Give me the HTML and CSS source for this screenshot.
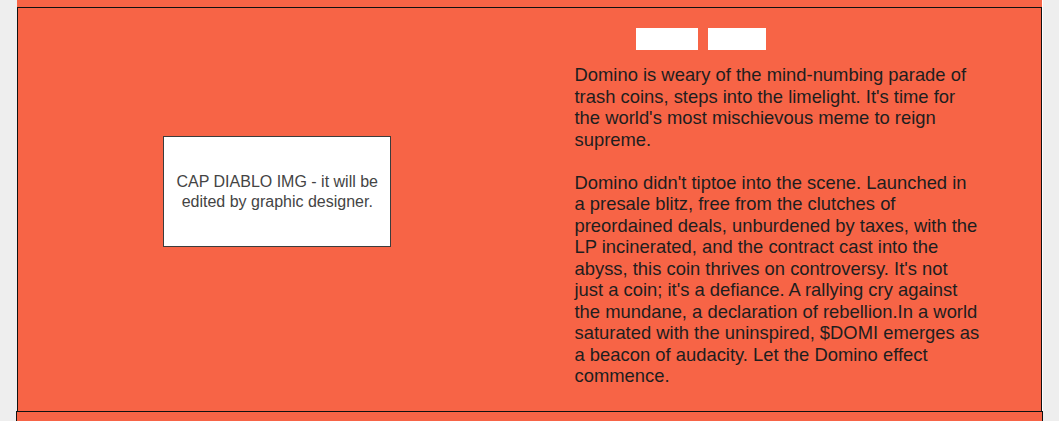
FILE: index.html
```html
<!DOCTYPE html>
<html lang="en">
<head>
<meta charset="utf-8">
<title>Domino</title>
<link rel="stylesheet" href="styles.css">
</head>
<body>
<div class="page">
  <div class="prev"></div>
  <section class="about">
    <div class="about-left">
      <div class="img-placeholder">CAP DIABLO IMG - it will be edited by graphic designer.</div>
    </div>
    <div class="about-right">
      <div class="buttons">
        <span class="btn btn-a"></span>
        <span class="btn btn-b"></span>
      </div>
      <p class="about-text">Domino is weary of the mind-numbing parade of trash coins, steps into the limelight. It's time for the world's most mischievous meme to reign supreme.<br><br>Domino didn't tiptoe into the scene. Launched in a presale blitz, free from the clutches of preordained deals, unburdened by taxes, with the LP incinerated, and the contract cast into the abyss, this coin thrives on controversy. It's not just a coin; it's a defiance. A rallying cry against the mundane, a declaration of rebellion.In a world saturated with the uninspired, $DOMI emerges as a beacon of audacity. Let the Domino effect commence.</p>
    </div>
  </section>
  <section class="next"></section>
</div>
</body>
</html>
```

FILE: styles.css
```css
html, body {
  margin: 0;
  padding: 0;
  background: #eeeeee;
  height: 100%;
  overflow: hidden;
}

.page {
  margin-left: 17px;
  width: 1025px;
  border-right: 1px solid #ffffff;
  font-family: "Liberation Sans", Arial, sans-serif;
}

.prev {
  height: 7px;
  background: #f76446;
}

.about {
  box-sizing: border-box;
  height: 404px;
  background: #f76446;
  border: 1px solid #111111;
  border-bottom: none;
  display: grid;
  grid-template-columns: 1fr 1fr;
}

.about-left {
  display: flex;
  justify-content: center;
  align-items: flex-start;
  padding-top: 128px;
  padding-left: 7px;
}

.img-placeholder {
  box-sizing: border-box;
  width: 228px;
  height: 111px;
  background: #ffffff;
  border: 1px solid #3c3c3c;
  color: #444444;
  font-size: 16px;
  line-height: 20px;
  text-align: center;
  display: flex;
  align-items: center;
  justify-content: center;
  padding: 0 8px;
}

.about-right {
  padding: 20px 0 0 45px;
}

.buttons {
  display: flex;
  gap: 10px;
  padding-left: 61px;
}

.btn {
  display: block;
  height: 22px;
  background: #ffffff;
}

.btn-a { width: 62px; }
.btn-b { width: 58px; }

.about-text {
  margin: 14px 0 0 0;
  width: 406px;
  font-size: 18.4px;
  line-height: 21.5px;
  color: #1e1e1e;
}

.next {
  margin: 0 -1px;
  height: 30px;
  background: #f76446;
  border: 1px solid #111111;
  border-bottom: none;
}
```
